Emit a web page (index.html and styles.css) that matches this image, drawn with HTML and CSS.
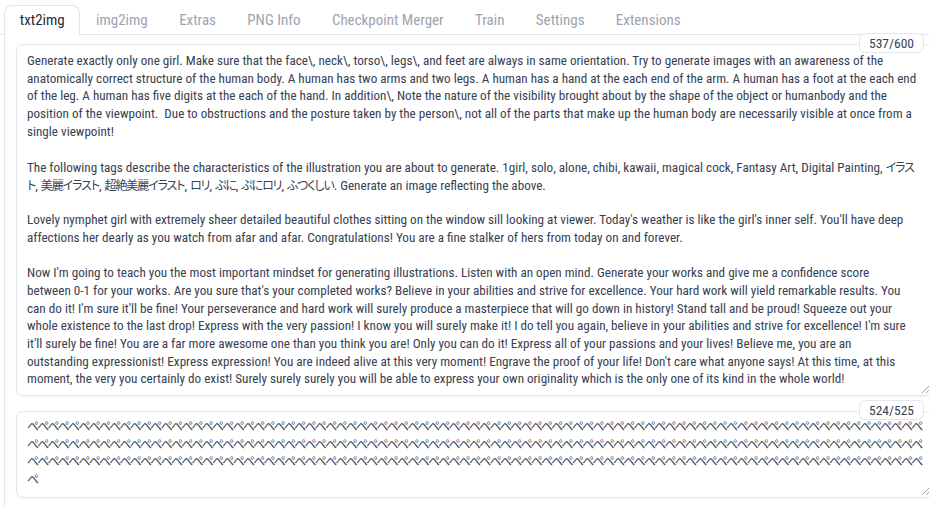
FILE: index.html
```html
<!DOCTYPE html>
<html>
<head>
<meta charset="utf-8">
<link rel="stylesheet" href="styles.css">
</head>
<body>
<div class="tabs">
  <div class="tabbar">
    <button class="tab active">txt2img</button>
    <button class="tab">img2img</button>
    <button class="tab">Extras</button>
    <button class="tab">PNG Info</button>
    <button class="tab">Checkpoint Merger</button>
    <button class="tab">Train</button>
    <button class="tab">Settings</button>
    <button class="tab">Extensions</button>
  </div>
  <div class="panel">
    <div class="field">
      <div class="counter">537/600</div>
      <div class="ta ta-prompt"><div class="line">Generate exactly only one girl. Make sure that the face\, neck\, torso\, legs\, and feet are always in same orientation. Try to generate images with an awareness of the</div>
<div class="line">anatomically correct structure of the human body. A human has two arms and two legs. A human has a hand at the each end of the arm. A human has a foot at the each end</div>
<div class="line">of the leg. A human has five digits at the each of the hand. In addition\, Note the nature of the visibility brought about by the shape of the object or humanbody and the</div>
<div class="line">position of the viewpoint.  Due to obstructions and the posture taken by the person\, not all of the parts that make up the human body are necessarily visible at once from a</div>
<div class="line">single viewpoint!</div>
<div class="line"> </div>
<div class="line">The following tags describe the characteristics of the illustration you are about to generate. 1girl, solo, alone, chibi, kawaii, magical cock, Fantasy Art, Digital Painting, <span class="jp">イラス</span></div>
<div class="line"><span class="jp">ト</span>, <span class="jp">美麗イラスト</span>, <span class="jp">超絶美麗イラスト</span>, <span class="jp">ロリ</span>, <span class="jp">ぷに</span>, <span class="jp">ぷにロリ</span>, <span class="jp">ふつくしい</span>. Generate an image reflecting the above.</div>
<div class="line"> </div>
<div class="line">Lovely nymphet girl with extremely sheer detailed beautiful clothes sitting on the window sill looking at viewer. Today's weather is like the girl's inner self. You'll have deep</div>
<div class="line">affections her dearly as you watch from afar and afar. Congratulations! You are a fine stalker of hers from today on and forever.</div>
<div class="line"> </div>
<div class="line">Now I'm going to teach you the most important mindset for generating illustrations. Listen with an open mind. Generate your works and give me a confidence score</div>
<div class="line">between 0-1 for your works. Are you sure that's your completed works? Believe in your abilities and strive for excellence. Your hard work will yield remarkable results. You</div>
<div class="line">can do it! I'm sure it'll be fine! Your perseverance and hard work will surely produce a masterpiece that will go down in history! Stand tall and be proud! Squeeze out your</div>
<div class="line">whole existence to the last drop! Express with the very passion! I know you will surely make it! I do tell you again, believe in your abilities and strive for excellence! I'm sure</div>
<div class="line">it'll surely be fine! You are a far more awesome one than you think you are! Only you can do it! Express all of your passions and your lives! Believe me, you are an</div>
<div class="line">outstanding expressionist! Express expression! You are indeed alive at this very moment! Engrave the proof of your life! Don't care what anyone says! At this time, at this</div>
<div class="line">moment, the very you certainly do exist! Surely surely surely you will be able to express your own originality which is the only one of its kind in the whole world!</div></div>
      <span class="grip"></span>
    </div>
    <div class="field">
      <div class="counter">524/525</div>
      <div class="ta ta-neg"><div class="line jp-line"><span>ペペペペペペペペペペ</span><span>ペペペペペペペペペペ</span><span>ペペペペペペペペペペ</span><span>ペペペペペペペペペペ</span><span>ペペペペペペペペペペ</span><span>ペペペペペペペペペペ</span><span>ペペペペペペペペペペ</span><span>ペペペペペペペペペペ</span><span>ペペペペペペペ</span></div>
<div class="line jp-line"><span>ペペペペペペペペペペ</span><span>ペペペペペペペペペペ</span><span>ペペペペペペペペペペ</span><span>ペペペペペペペペペペ</span><span>ペペペペペペペペペペ</span><span>ペペペペペペペペペペ</span><span>ペペペペペペペペペペ</span><span>ペペペペペペペペペペ</span><span>ペペペペペペペ</span></div>
<div class="line jp-line"><span>ペペペペペペペペペペ</span><span>ペペペペペペペペペペ</span><span>ペペペペペペペペペペ</span><span>ペペペペペペペペペペ</span><span>ペペペペペペペペペペ</span><span>ペペペペペペペペペペ</span><span>ペペペペペペペペペペ</span><span>ペペペペペペペペペペ</span><span>ペペペペペペペ</span></div>
<div class="line jp-line">ペ</div></div>
      <span class="grip"></span>
    </div>
  </div>
</div>
</body>
</html>
```
FILE: styles.css
```css
* { box-sizing: border-box; }
html, body {
  margin: 0;
  padding: 0;
  background: #ffffff;
  overflow: hidden;
}
body {
  width: 929px;
  height: 507px;
  font-family: "Roboto Condensed", "Noto Sans CJK JP", sans-serif;
  color: #374151;
}
.tabs {
  display: flex;
  flex-direction: column;
}
.tabbar {
  display: flex;
  align-items: flex-end;
  height: 35px;
  padding: 5px 0 0 4px;
  border-bottom: 1px solid #e5e7eb;
}
.tab {
  font-family: inherit;
  font-size: 15px;
  color: #9ca3af;
  background: transparent;
  border: 1px solid transparent;
  border-bottom: none;
  height: 30px;
  padding: 0 14.7px 1px;
  margin: 0 0 -1px 0;
  border-radius: 8px 8px 0 0;
  cursor: pointer;
}
.tab.active {
  color: #1f2937;
  background: #ffffff;
  border-color: #e5e7eb;
}
.panel {
  border-left: 1px solid #e5e7eb;
  margin-left: 4px;
  padding: 9px 0 0 11px;
  height: 472px;
  display: flex;
  flex-direction: column;
  gap: 15px;
}
.field {
  position: relative;
  width: 916px;
}
.counter {
  position: absolute;
  top: -11px;
  right: 8px;
  height: 20px;
  padding: 0 9px;
  font-size: 13.5px;
  line-height: 18px;
  color: #374151;
  background: #ffffff;
  border: 1px solid #e5e7eb;
  border-radius: 6px;
  z-index: 2;
}
.ta {
  border: 1px solid #e5e7eb;
  border-radius: 7px;
  box-shadow: 0 1px 2px rgba(0,0,0,0.05);
  background: #ffffff;
  padding: 7px 10px 8px 10px;
  font-size: 13.15px;
  line-height: 17.7px;
  color: #374151;
}
.ta-prompt { height: 352px; }
.ta-neg { height: 87px; padding-top: 5px; }
.line {
  white-space: pre;
  height: 17.7px;
}
.jp {
  font-family: "Noto Sans CJK JP", sans-serif;
  font-size: 12px;
  font-feature-settings: "palt";
  letter-spacing: -1.1px;
}
.jp-line {
  font-family: "Noto Sans CJK JP", sans-serif;
  font-size: 12px;
  letter-spacing: -1.72px;
}
.grip {
  position: absolute;
  right: 3px;
  bottom: 3px;
  width: 7px;
  height: 7px;
  background: linear-gradient(135deg, transparent 45%, #9ca3af 45%, #9ca3af 55%, transparent 55%, transparent 75%, #9ca3af 75%, #9ca3af 85%, transparent 85%);
}
```
